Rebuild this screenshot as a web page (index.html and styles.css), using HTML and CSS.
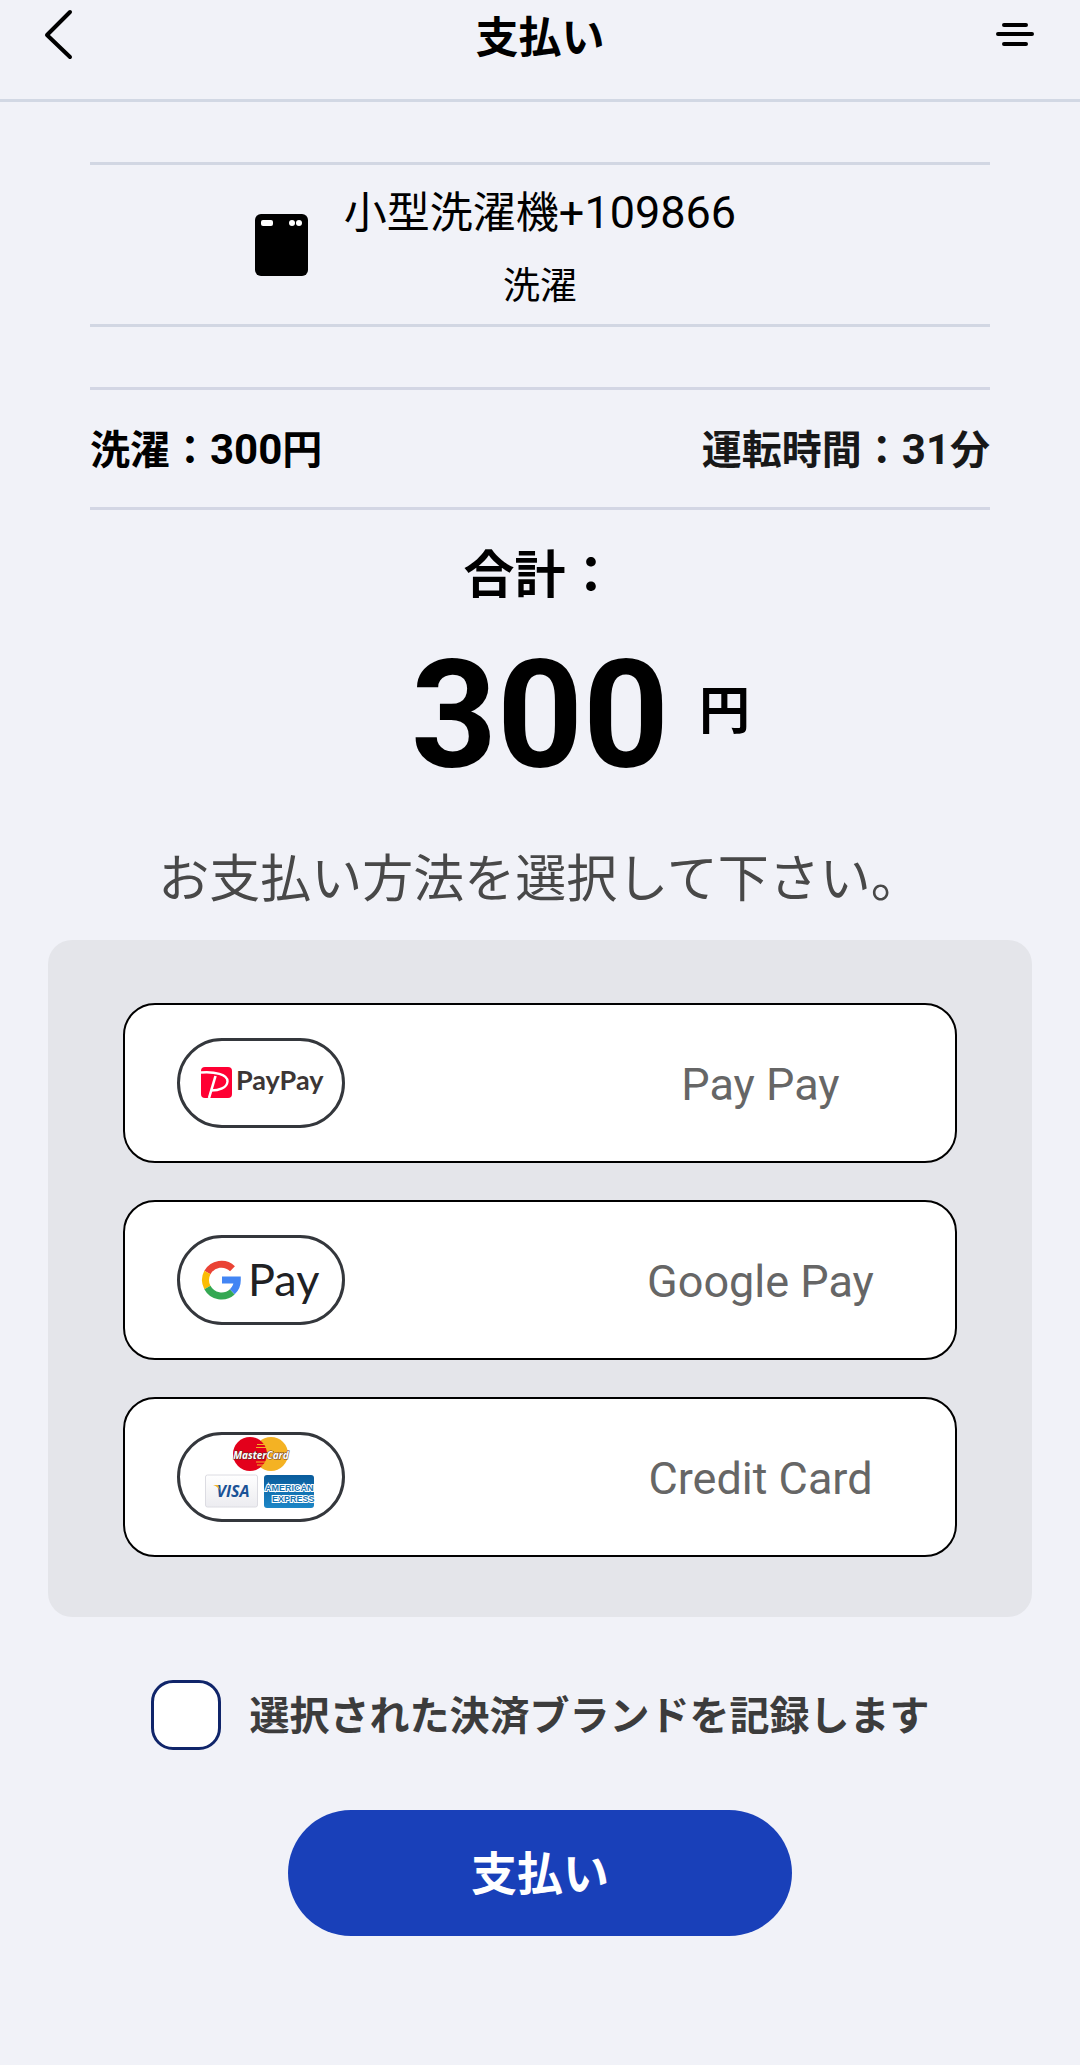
FILE: index.html
```html
<!DOCTYPE html>
<html lang="ja">
<head>
	<meta charset="UTF-8">
	<meta name="viewport" content="width=device-width, initial-scale=1">
	<title>支払い</title>
	<link rel="stylesheet" href="styles.css">
</head>
<body>

	<header class="header">
		<button class="icon-btn" type="button" aria-label="戻る">
			<svg width="30" height="52" viewBox="0 0 30 52"><path d="M26 3L3 26L26 48" fill="none" stroke="#000" stroke-width="4" stroke-linecap="round" stroke-linejoin="round"/></svg>
		</button>
		<h1>支払い</h1>
		<button class="icon-btn menu-btn" type="button" aria-label="メニュー">
			<svg width="40" height="52" viewBox="0 0 40 52"><path d="M8 16H30M2 25H36M8 35H30" fill="none" stroke="#000" stroke-width="4" stroke-linecap="round"/></svg>
		</button>
	</header>

	<main>
		<!-- 機器 -->
		<section class="machine">
			<svg class="machine-icon" width="54" height="64" viewBox="0 0 54 64">
				<rect x="1" y="1" width="53" height="62" rx="6" fill="#000"/>
				<rect x="7" y="7" width="12" height="6" rx="2" fill="#fff"/>
				<circle cx="38" cy="10" r="3" fill="#fff"/>
				<circle cx="45" cy="10" r="3" fill="#fff"/>
			</svg>
			<div class="machine-text">
				<div class="machine-name">小型洗濯機<span class="num">+109866</span></div>
				<div class="machine-mode">洗濯</div>
			</div>
		</section>

		<section class="detail">
			<div>洗濯：<span class="num">300</span>円</div>
			<div class="time">運転時間：<span class="num">31</span>分</div>
		</section>

		<!-- 合計 -->
		<h2 class="total-label">合計：</h2>
		<div class="total">
			<span class="amount">300</span>
			<span class="yen">円</span>
		</div>

		<p class="prompt">お支払い方法を選択して下さい。</p>

		<!-- 支払い方法 -->
		<div class="methods">
			<button class="method" type="button">
				<svg class="brand" width="168" height="90" viewBox="0 0 168 90" aria-hidden="true">
					<rect x="1.5" y="1.5" width="165" height="87" rx="43.5" fill="#fff" stroke="#34373c" stroke-width="3"/>
					<rect x="24" y="29" width="31" height="31" rx="4" fill="#ff0033"/>
					<path d="M24 34.500C37 33.500 51 36 50.500 43.500C50 50 42 52.500 34 52.500" fill="none" stroke="#fff" stroke-width="2.400"/>
					<path d="M38.500 38L32 60" fill="none" stroke="#fff" stroke-width="2.600"/>
					<text class="logo-paypay" x="59" y="52">PayPay</text>
				</svg>
				<span class="method-name">Pay Pay</span>
			</button>
			<button class="method" type="button">
				<svg class="brand" width="168" height="90" viewBox="0 0 168 90" aria-hidden="true">
					<rect x="1.5" y="1.5" width="165" height="87" rx="43.5" fill="#fff" stroke="#34373c" stroke-width="3"/>
					<g fill="none" stroke-width="7">
						<path d="M55.500 33.700A16 16 0 0 0 30.400 37.500" stroke="#ea4335"/>
						<path d="M30.400 37.500A16 16 0 0 0 30.400 52.500" stroke="#fbbc04"/>
						<path d="M30.400 52.500A16 16 0 0 0 55.300 56.800" stroke="#34a853"/>
						<path d="M55.300 56.800A16 16 0 0 0 60.300 45H45" stroke="#4285f4"/>
					</g>
					<text class="logo-gpay" x="71" y="61">Pay</text>
				</svg>
				<span class="method-name">Google Pay</span>
			</button>
			<button class="method" type="button">
				<svg class="brand" width="168" height="90" viewBox="0 0 168 90" aria-hidden="true">
					<defs>
						<linearGradient id="amex" x1="0" y1="0" x2="0" y2="1">
							<stop offset="0" stop-color="#0a5c9c"/>
							<stop offset="1" stop-color="#1c86c6"/>
						</linearGradient>
						<linearGradient id="visa" x1="0" y1="0" x2="0" y2="1">
							<stop offset="0" stop-color="#fff"/>
							<stop offset="1" stop-color="#ececf0"/>
						</linearGradient>
					</defs>
					<rect x="1.5" y="1.5" width="165" height="87" rx="43.5" fill="#fff" stroke="#34373c" stroke-width="3"/>
					<circle cx="94" cy="22" r="17" fill="#f4b223"/>
					<circle cx="73" cy="22" r="17" fill="#e3001b"/>
					<path d="M80 12.500H88M79 15.500H90M79 30H90M80 33H87" stroke="#f4b223" stroke-width="1"/>
					<text class="logo-mc" x="84" y="27">MasterCard</text>
					<rect x="28.500" y="43" width="52" height="32" rx="2" fill="url(#visa)" stroke="#dcdce2"/>
					<text class="logo-visa" x="56" y="65">VISA</text>
					<path d="M36 53H41L43 58C41 55.500 39 54 36 53Z" fill="#f0b429"/>
					<rect x="87" y="43" width="50" height="33" rx="3" fill="url(#amex)"/>
					<text class="logo-amex" x="88" y="59">AMERICAN</text>
					<text class="logo-amex" x="95" y="70">EXPRESS</text>
				</svg>
				<span class="method-name">Credit Card</span>
			</button>
		</div>

		<label class="remember">
			<input type="checkbox">
			<span>選択された決済ブランドを記録します</span>
		</label>

		<button class="pay-btn" type="button">支払い</button>
	</main>

</body>
</html>
```
FILE: styles.css
```css
* {
	box-sizing: border-box;
}
body {
	margin: 0;
	padding: 0;
	background: #f1f2f8;
	color: #000;
	font-family: Roboto, "Noto Sans CJK JP", sans-serif;
}
h1, h2, p {
	margin: 0;
}
button {
	font-family: inherit;
	border: none;
	cursor: pointer;
}
.header {
	display: grid;
	grid-template-columns: 1fr auto 1fr;
	align-items: center;
	padding: 0 44px 30px;
	border-bottom: 3px solid #d2d8e4;
}
.header h1 {
	font-size: 43px;
	line-height: 69px;
	padding-top: 4px;
	height: 69px;
	font-weight: bold;
}
.icon-btn {
	display: flex;
	padding: 0;
	background: none;
}
.menu-btn {
	justify-self: end;
}
.num {
	line-height: 1;
}
.machine {
	display: grid;
	grid-template-columns: 1fr auto 1fr;
	align-items: center;
	column-gap: 36px;
	margin: 60px 90px 0;
	border-top: 3px solid #d2d7e3;
	border-bottom: 3px solid #d2d7e3;
}
.machine-icon {
	justify-self: end;
}
.machine-text {
	display: flex;
	flex-direction: column;
	gap: 2px;
	padding: 12px 0 1px;
	text-align: center;
	line-height: 72px;
}
.machine-name {
	font-size: 43px;
}
.machine-name .num {
	font-size: 45px;
}
.machine-mode {
	font-size: 37px;
}
.detail {
	display: flex;
	justify-content: space-between;
	margin: 60px 90px 0;
	padding: 25px 0 20px;
	border-top: 3px solid #d3d6e4;
	border-bottom: 3px solid #d3d6e4;
	font-size: 40px;
	line-height: 72px;
	font-weight: bold;
}
.detail .num {
	font-size: 42px;
}
.time {
	color: #181818;
}
.total-label {
	margin-top: 30px;
	text-align: center;
	font-size: 51px;
	line-height: 72px;
}
.total {
	display: grid;
	grid-template-columns: 1fr auto 1fr;
	align-items: center;
	column-gap: 30px;
	margin-top: 34px;
	font-weight: bold;
}
.amount {
	grid-column: 2;
	font-size: 150px;
	line-height: 140px;
}
.yen {
	padding-bottom: 8px;
	font-size: 51px;
	line-height: 72px;
}
.prompt {
	margin-top: 58px;
	text-align: center;
	font-size: 51px;
	line-height: 72px;
	color: #484848;
}
.methods {
	display: flex;
	flex-direction: column;
	gap: 37px;
	margin: 24px 48px 0;
	padding: 63px 75px 60px;
	background: #e4e5ea;
	border-radius: 24px;
}
.method {
	display: flex;
	align-items: center;
	justify-content: space-between;
	padding: 33px 0 33px 52px;
	background: #fff;
	border: 2px solid #000;
	border-radius: 32px;
}
.method-name {
	width: 50%;
	padding-top: 4px;
	font-size: 45px;
	line-height: 60px;
	color: #666;
	text-align: center;
}
.logo-paypay {
	font: bold 27px Lato, sans-serif;
	fill: #3c3635;
}
.logo-gpay {
	font: 45px Lato, sans-serif;
	fill: #202124;
}
.logo-mc {
	font: italic bold 10px "Open Sans", sans-serif;
	fill: #fff;
	stroke: #5c2a1e;
	stroke-width: 1px;
	paint-order: stroke;
	text-anchor: middle;
}
.logo-visa {
	font: italic bold 16px "Open Sans", sans-serif;
	fill: #1a5296;
	text-anchor: middle;
}
.logo-amex {
	font: bold 9px "Liberation Sans", sans-serif;
	fill: #1672b0;
	stroke: #fff;
	stroke-width: 2px;
	paint-order: stroke;
}
.remember {
	display: flex;
	align-items: center;
	justify-content: center;
	gap: 29px;
	margin-top: 61px;
	font-size: 40px;
	line-height: 70px;
	font-weight: bold;
	color: #3c3c3c;
}
.remember span {
	padding-top: 4px;
}
.remember input {
	appearance: none;
	flex: none;
	width: 70px;
	height: 70px;
	margin: 0;
	background: #fff;
	border: 3px solid #10256a;
	border-radius: 22px;
}
.remember input:checked {
	background: #1a41b9;
}
.pay-btn {
	display: block;
	min-width: 504px;
	margin: 58px auto 0;
	padding: 29px 60px 27px;
	background: #1940b9;
	color: #fff;
	border-radius: 63px;
	font-size: 46px;
	line-height: 70px;
	font-weight: bold;
}
```
